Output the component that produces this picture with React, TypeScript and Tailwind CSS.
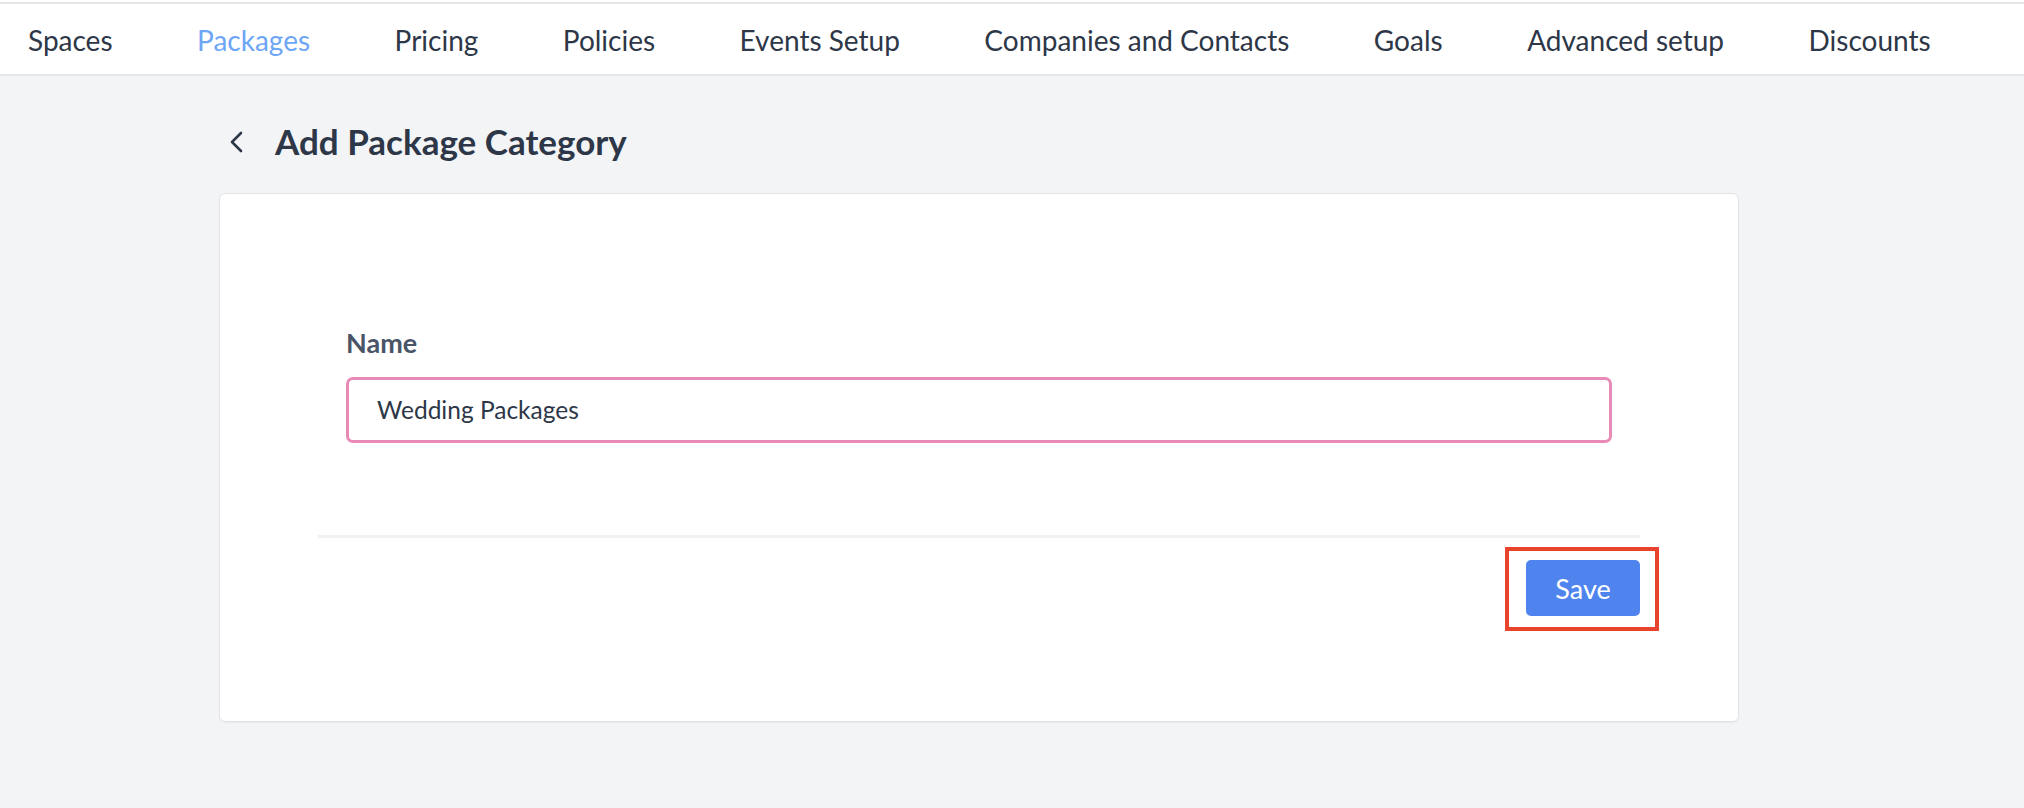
import React from "react";

const navItems = [
  "Spaces",
  "Packages",
  "Pricing",
  "Policies",
  "Events Setup",
  "Companies and Contacts",
  "Goals",
  "Advanced setup",
  "Discounts",
];

export default function App() {
  return (
    <div
      className="min-h-[808px] bg-[#f3f4f6]"
      style={{ fontFamily: "Lato, 'Open Sans', sans-serif" }}
    >
      <div className="h-[2px] bg-white" />
      <nav className="flex h-[74px] items-center gap-[84.5px] border-t-2 border-b-2 border-[#e5e7eb] bg-white pl-[28px] pt-[1px]">
        {navItems.map((item) => (
          <span
            key={item}
            className={
              "whitespace-nowrap text-[28px] leading-none " +
              (item === "Packages" ? "text-[#6ea6f5]" : "text-[#2d3748]")
            }
          >
            {item}
          </span>
        ))}
      </nav>

      <div className="ml-[219px] w-[1520px]">
        <div className="flex h-[117px] items-center pt-[14px]">
          <svg
            width="16"
            height="22"
            viewBox="0 0 16 22"
            fill="none"
            className="ml-[9px]"
          >
            <path
              d="M13 2 L4 11 L13 20"
              stroke="#2d3748"
              strokeWidth="2.6"
              strokeLinecap="round"
              strokeLinejoin="round"
            />
          </svg>
          <h1 className="ml-[31px] text-[35px] font-bold leading-none text-[#2d3748]">
            Add Package Category
          </h1>
        </div>

        <div className="flex h-[529px] flex-col rounded-[6px] border border-[#e2e4e8] bg-white pt-[133px] shadow-[0_1px_1px_rgba(0,0,0,0.04)]">
          <div className="px-[126px]">
            <label className="block text-[27px] font-bold leading-[32px] text-[#4a5568]">
              Name
            </label>
            <div className="mt-[18px] flex h-[66px] items-center rounded-[7px] border-[3px] border-[#e88ab5] pl-[28px]">
              <span className="text-[24.5px] leading-none text-[#2d3748]">
                Wedding Packages
              </span>
            </div>
          </div>
          <div className="mx-[98px] mt-[92px] h-[3px] bg-[#f0f1f3]" />
          <div className="mx-[98px] mt-[22px] flex justify-end">
            <div className="relative">
              <button className="flex h-[56px] w-[114px] items-center justify-center rounded-[5px] bg-[#4f84ef] text-[27px] leading-none text-white">
                Save
              </button>
              <div className="pointer-events-none absolute -left-[21px] -top-[13px] h-[84px] w-[154px] border-[4px] border-[#e8432d]" />
            </div>
          </div>
        </div>
      </div>
    </div>
  );
}
